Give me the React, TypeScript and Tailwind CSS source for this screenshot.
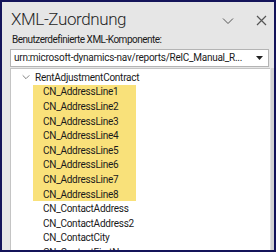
import React from 'react';

const font = { fontFamily: 'Roboto, "Noto Sans", sans-serif' };

function Chevron({ className }: { className?: string }) {
  return (
    <svg className={className} width="12" height="8" viewBox="0 0 12 8" fill="none">
      <path d="M1 1.5 L6 6.5 L11 1.5" stroke="currentColor" strokeWidth="1" />
    </svg>
  );
}

function Close() {
  return (
    <svg width="11" height="11" viewBox="0 0 11 11" fill="none">
      <path d="M1 1 L10 10 M10 1 L1 10" stroke="#555" strokeWidth="1.2" />
    </svg>
  );
}

export default function App() {
  const highlighted = Array.from({ length: 8 }, (_, i) => `CN_AddressLine${i + 1}`);
  const rest = ['CN_ContactAddress', 'CN_ContactAddress2', 'CN_ContactCity', 'CN_ContactFirstName'];

  return (
    <div
      className="w-[276px] h-[252px] border-2 border-[#14145a] bg-[#e6e6e6] overflow-hidden flex flex-col text-[#1a1a1a] tracking-[-0.25px]"
      style={font}
    >
      <div className="shrink-0 flex items-start justify-between h-[31px] pl-[9px] pr-[7px] pt-[7px]">
        <span className="text-[17px] text-[#262626] leading-[20px] font-light tracking-[-0.4px]">XML-Zuordnung</span>
        <div className="flex items-center gap-[22px] text-[#555] pt-[6px]">
          <Chevron />
          <Close />
        </div>
      </div>
      <div className="shrink-0 pl-[10px] text-[10px] leading-[14px] tracking-[-0.5px]">Benutzerdefinierte XML-Komponente:</div>
      <div className="shrink-0 ml-[8px] mr-[5px] mt-[2px] h-[18px] bg-white border border-[#b4b4b4] flex items-center pl-[3px] pr-[5px]">
        <span className="flex-1 text-[10px] leading-none whitespace-nowrap overflow-hidden">
          urn:microsoft-dynamics-nav/reports/RelC_Manual_R...
        </span>
        <svg width="7" height="4" viewBox="0 0 7 4" className="ml-[4px] shrink-0">
          <path d="M0 0 L7 0 L3.5 4 Z" fill="#222" />
        </svg>
      </div>
      <div className="flex flex-1 min-h-0 mt-[1px] ml-[8px]">
        <div className="flex-1 bg-white border-l border-t border-[#c4c4c4] pt-[1px] text-[10px] overflow-hidden">
          <div className="flex items-center h-[14.6px] pl-[11px]">
            <Chevron className="text-[#444] w-[8px] h-[6px] mr-[5px]" />
            <span>RentAdjustmentContract</span>
          </div>
          <div className="ml-[22px] w-[103px] bg-[#f9e17a]">
            {highlighted.map((n) => (
              <div key={n} className="h-[14.6px] flex items-center pl-[10px] whitespace-nowrap">
                {n}
              </div>
            ))}
          </div>
          {rest.map((n) => (
            <div key={n} className="h-[14.6px] flex items-center pl-[32px] whitespace-nowrap">
              {n}
            </div>
          ))}
        </div>
        <div className="w-[4px] bg-[#d2d2d2] border-l border-[#e2e2e2]" />
      </div>
    </div>
  );
}
